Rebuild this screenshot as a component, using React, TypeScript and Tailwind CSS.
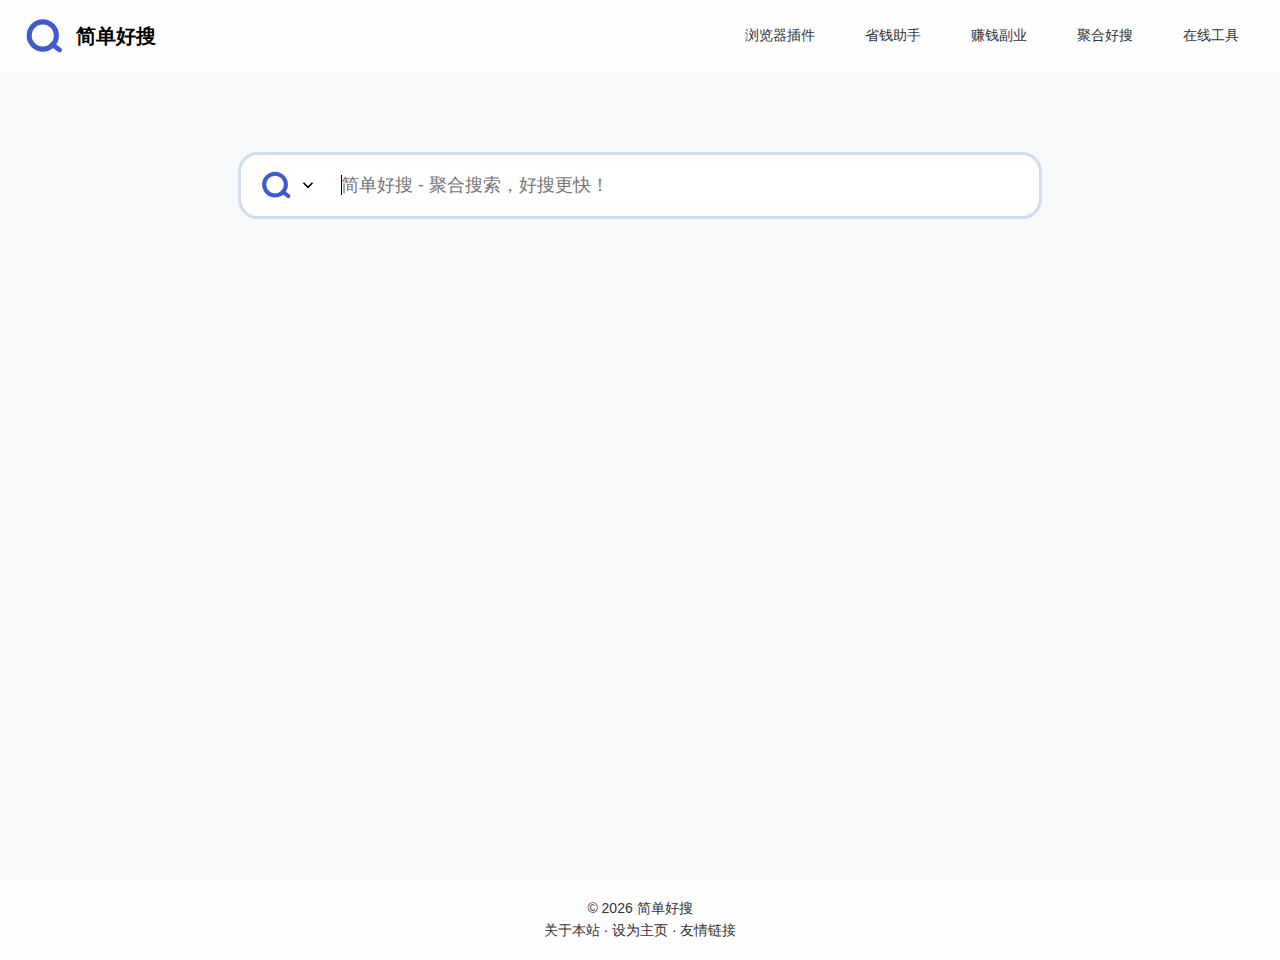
const NAV_ITEMS = ["浏览器插件", "省钱助手", "赚钱副业", "聚合好搜", "在线工具"];
const FOOTER_LINKS = ["关于本站", "设为主页", "友情链接"];

function SearchLogo({ className }: { className: string }) {
  return (
    <svg viewBox="0 0 40 40" fill="none" stroke="#405ccb" className={className}>
      <circle cx="18.8" cy="19.5" r="13.6" strokeWidth="5.100" />
      <path d="M28.5 28.6l7 5.3" strokeWidth="4.9" strokeLinecap="round" />
    </svg>
  );
}

export default function App() {
  return (
    <div className="min-h-screen flex flex-col bg-[#f8f9fb] text-[#333] font-['Liberation_Sans',sans-serif]">

      {/* HEADER */}
      <header className="h-[73px] flex items-center justify-between bg-[#fefefe] pl-6 pr-[25px] pb-px">
        <a href="#" className="flex items-center gap-3">
          <SearchLogo className="w-10 h-10" />
          <span className="text-xl font-bold text-black">简单好搜</span>
        </a>
        <nav className="flex items-center gap-[18px] pb-0.5 text-sm">
          {NAV_ITEMS.map((item) => (
            <a key={item} href="#" className="px-4">
              {item}
            </a>
          ))}
        </nav>
      </header>

      {/* SEARCH */}
      <main className="flex-1 flex justify-center items-start pt-[79px]">
        <form className="w-[804px] h-[67px] flex items-center rounded-[20px] border-[3px] border-[#d0ddee] bg-white pl-[19px] pr-5">
          <button type="button" className="flex items-center gap-2 pb-px text-black">
            <SearchLogo className="w-8 h-8" />
            <svg
              width="16"
              height="16"
              viewBox="0 0 16 16"
              fill="none"
              stroke="currentColor"
              strokeWidth="1.6"
            >
              <path d="M3.5 5.8L8 10.3l4.500-4.500" />
            </svg>
          </button>
          <div className="relative ml-[25px] flex-1">
            <input
              type="text"
              placeholder="简单好搜 - 聚合搜索，好搜更快！"
              className="block w-full h-[30px] bg-transparent text-lg outline-none placeholder:text-[#757575]"
            />
            <span className="absolute left-0 top-1 w-px h-5 bg-black" />
          </div>
        </form>
      </main>

      {/* FOOTER */}
      <footer className="h-[81px] pt-[18px] bg-[#fefefe] text-center text-sm leading-[22px]">
        <p>© 2026 简单好搜</p>
        <p>{FOOTER_LINKS.join(" · ")}</p>
      </footer>

    </div>
  );
}
